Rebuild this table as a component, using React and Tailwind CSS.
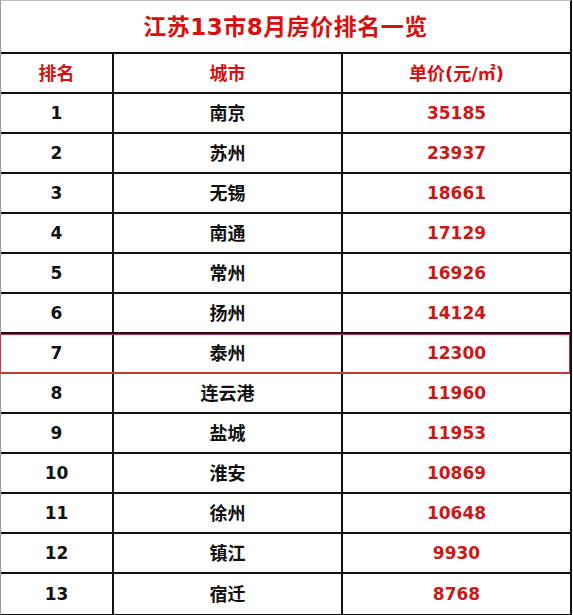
import React from 'react';

const rows = [
  ['1', '南京', '35185'],
  ['2', '苏州', '23937'],
  ['3', '无锡', '18661'],
  ['4', '南通', '17129'],
  ['5', '常州', '16926'],
  ['6', '扬州', '14124'],
  ['7', '泰州', '12300'],
  ['8', '连云港', '11960'],
  ['9', '盐城', '11953'],
  ['10', '淮安', '10869'],
  ['11', '徐州', '10648'],
  ['12', '镇江', '9930'],
  ['13', '宿迁', '8768'],
];

const App = () => {
  return (
    <div className="w-[573px] h-[615px] bg-white font-['DejaVu_Sans','Noto_Sans_CJK_SC',sans-serif] font-bold">
      <div className="w-[572px] border-l border-t border-l-[#9a9a9a] border-t-[#bdbdbd] border-r-2 border-b-2 border-r-[#111] border-b-[#111]">
        <div className="h-[53px] border-b-2 border-[#111] flex items-center justify-center pt-[2px] text-[23px] text-[#d90f0f] tracking-[0.5px]">
          江苏13市8月房价排名一览
        </div>

        <div className="grid grid-cols-[113px_229px_1fr] h-[40px] border-b-2 border-[#111] text-[18px] text-[#d90f0f]">
          <div className="flex items-center justify-center border-r-2 border-[#111]">排名</div>
          <div className="flex items-center justify-center border-r-2 border-[#111]">城市</div>
          <div className="flex items-center justify-center">
            单价(元/㎡)
          </div>
        </div>

        {rows.map(([rank, city, price], i) => {
          const hl = rank === '7';
          const last = i === rows.length - 1;
          return (
            <div
              key={rank}
              className={`relative grid grid-cols-[113px_229px_1fr] h-[40px] ${last ? '' : 'border-b-2 border-[#111]'}`}
            >
              <div className="flex items-center justify-center pt-px border-r-2 border-[#111] text-[17px] text-[#111]">
                {rank}
              </div>
              <div className="flex items-center justify-center pt-px border-r-2 border-[#111] text-[18px] text-[#111]">
                {city}
              </div>
              <div className="flex items-center justify-center pt-px text-[17px] text-[#cc1818]">
                {price}
              </div>
              {hl && (
                <div className="pointer-events-none absolute -left-px right-0 top-0 -bottom-[2px] border border-b-2 border-[#c43a3a]" />
              )}
            </div>
          );
        })}
      </div>
    </div>
  );
};

export default App;
